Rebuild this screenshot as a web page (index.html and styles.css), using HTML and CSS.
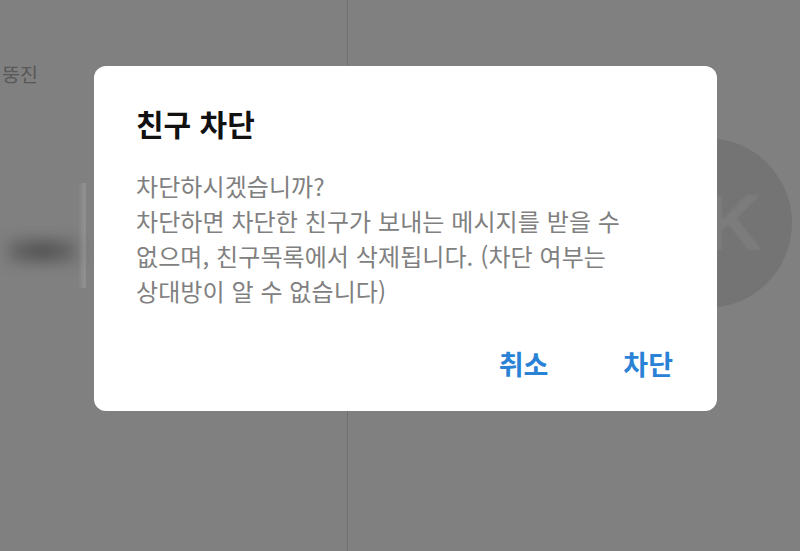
FILE: index.html
```html
<!DOCTYPE html>
<html lang="ko">
<head>
    <meta charset="utf-8" />
    <title>친구 차단</title>
    <link rel="stylesheet" href="styles.css">
</head>
<body>
    <div class="page">
        <div class="left-pane">
            <p class="status">뚱진</p>
            <div class="friend-row">
                <span class="friend-name"></span>
                <span class="friend-edge"></span>
            </div>
        </div>
        <div class="right-pane">
            <div class="avatar"><span class="avatar-letter">K</span></div>
        </div>
    </div>
    <div class="overlay">
        <div class="dialog">
            <h1 class="title">친구 차단</h1>
            <p class="message">차단하시겠습니까?<br>차단하면 차단한 친구가 보내는 메시지를 받을 수<br>없으며, 친구목록에서 삭제됩니다. (차단 여부는<br>상대방이 알 수 없습니다)</p>
            <div class="actions">
                <button class="action">취소</button>
                <button class="action">차단</button>
            </div>
        </div>
    </div>
</body>
</html>
```

FILE: styles.css
```css
* {
    margin: 0;
    padding: 0;
    box-sizing: border-box;
}
html, body {
    width: 800px;
    height: 551px;
    overflow: hidden;
}
body {
    position: relative;
    font-family: "Noto Sans CJK KR", "Noto Sans", sans-serif;
    background: #d5d5d5;
}
.page {
    display: flex;
    height: 100%;
}
.left-pane {
    width: 348px;
    border-right: 1px solid #b9b9b9;
    padding-top: 60px;
}
.status {
    padding-left: 2px;
    font-size: 19.5px;
    line-height: 28px;
    color: #939393;
}
.friend-row {
    display: flex;
    align-items: flex-start;
    height: 105px;
    margin-top: 95px;
}
.friend-name {
    width: 68px;
    height: 22px;
    margin-top: 57px;
    margin-left: 8px;
    background: linear-gradient(90deg, #b0b0b0, #8c8c8c 50%, #b0b0b0);
    filter: blur(7px);
}
.friend-edge {
    width: 8px;
    height: 105px;
    margin-left: 2px;
    background: linear-gradient(90deg, #d5d5d5, #eee 70%);
}
.right-pane {
    position: relative;
    flex: 1;
}
.avatar {
    position: absolute;
    left: 274px;
    top: 138px;
    width: 170px;
    height: 170px;
    border-radius: 50%;
    background: #c1c1c1;
}
.avatar-letter {
    display: block;
    padding-left: 54px;
    color: #cfcfcf;
    font-family: "Liberation Sans", sans-serif;
    font-size: 80px;
    font-weight: bold;
    line-height: 170px;
    text-align: center;
    filter: blur(1px);
}
.overlay {
    position: absolute;
    inset: 0;
    background: rgba(0, 0, 0, 0.4);
}
.dialog {
    position: absolute;
    left: 94px;
    top: 66px;
    width: 623px;
    height: 345px;
    padding: 36px 42px 0;
    border-radius: 12px;
    background: #fff;
}
.title {
    font-size: 30px;
    font-weight: 700;
    line-height: 42px;
    color: #111;
}
.message {
    margin-top: 24px;
    font-size: 24px;
    letter-spacing: 0.08px;
    line-height: 35px;
    color: #808080;
}
.actions {
    display: flex;
    justify-content: flex-end;
    gap: 75px;
    margin-top: 37px;
    padding-right: 2px;
}
.action {
    border: 0;
    background: none;
    font: inherit;
    font-size: 27px;
    font-weight: 700;
    line-height: 38px;
    color: #2a82d6;
}
```
